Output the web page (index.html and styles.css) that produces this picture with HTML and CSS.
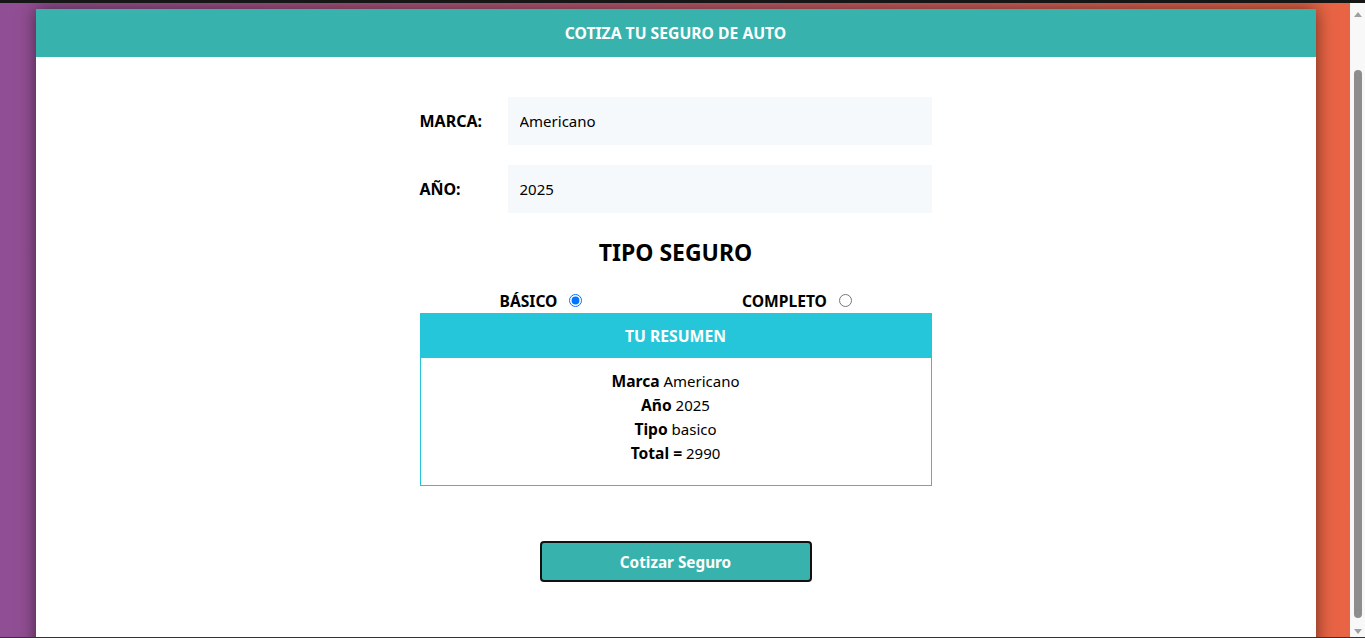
FILE: index.html
```html
<!DOCTYPE html>
<html lang="es">

<head>
    <meta charset="UTF-8">
    <title>Cotizador de Seguros</title>
    <link rel="stylesheet" href="styles.css">
</head>

<body>
    <div class="pagina">
        <div class="contenedor">
            <header class="cabecera">
                <h1>Cotiza tu seguro de auto</h1>
            </header>
            <form class="formulario">
                <div class="campo">
                    <label for="marca">Marca:</label>
                    <select id="marca" name="marca">
                        <option value="americano" selected>Americano</option>
                        <option value="europeo">Europeo</option>
                        <option value="asiatico">Asiático</option>
                    </select>
                </div>
                <div class="campo">
                    <label for="year">Año:</label>
                    <select id="year" name="year">
                        <option value="2025" selected>2025</option>
                        <option value="2024">2024</option>
                        <option value="2023">2023</option>
                    </select>
                </div>

                <h2 class="tipo-titulo">Tipo Seguro</h2>
                <div class="opciones">
                    <div class="opcion">
                        <label for="basico">Básico</label>
                        <input type="radio" id="basico" name="plan" value="basico" checked>
                    </div>
                    <div class="opcion">
                        <label for="completo">Completo</label>
                        <input type="radio" id="completo" name="plan" value="completo">
                    </div>
                </div>

                <!-- resumen de la cotizacion -->
                <div class="resumen">
                    <div class="resumen-titulo">Tu Resumen</div>
                    <ul class="resumen-lista">
                        <li><b>Marca</b> Americano</li>
                        <li><b>Año</b> 2025</li>
                        <li><b>Tipo</b> basico</li>
                        <li><b>Total =</b> 2990</li>
                    </ul>
                </div>

                <div class="acciones">
                    <button type="button" class="boton">Cotizar Seguro</button>
                </div>
            </form>
        </div>
    </div>
    <!-- barra de desplazamiento de la ventana -->
    <div class="barra">
        <span class="flecha arriba"></span>
        <div class="pista"><span class="pulgar"></span></div>
        <span class="flecha abajo"></span>
    </div>
</body>

</html>
```

FILE: styles.css
```css
html,
body {
    height: 100%;
}

body {
    margin: 0;
    box-sizing: border-box;
    border-top: 3px solid #161616;
    border-bottom: 1px solid #333;
    display: flex;
    overflow: hidden;
    font-family: "Noto Sans", "Open Sans", sans-serif;
    color: #000;
}

.pagina {
    flex: 1;
    overflow: hidden;
    padding-left: 1px;
    background: linear-gradient(to right, #904e95, #e96443);
}

.contenedor {
    width: 1280px;
    margin: 6px auto 0;
    background-color: #fff;
    box-shadow: 0 0 16px rgba(0, 0, 0, 0.55);
    min-height: 700px;
}

.cabecera {
    background-color: #38b2ac;
    height: 48px;
    display: flex;
    align-items: center;
    justify-content: center;
}

.cabecera h1 {
    margin: 0;
    color: #fff;
    font-size: 15.7px;
    font-weight: bold;
    text-transform: uppercase;
}

.formulario {
    width: 512px;
    margin: 0 auto;
    padding-top: 40px;
}

.campo {
    display: flex;
    align-items: center;
    margin-bottom: 20px;
}

.campo label {
    width: 88px;
    flex: none;
    font-weight: bold;
    font-size: 16px;
    text-transform: uppercase;
}

.campo select {
    flex: 1;
    height: 48px;
    padding: 0 12px;
    border: none;
    background-color: #f6f9fc;
    font-family: inherit;
    font-size: 15px;
    color: #000;
    appearance: none;
    -webkit-appearance: none;
}

.tipo-titulo {
    margin: 23px 0 0;
    font-size: 23px;
    line-height: 32px;
    text-align: center;
    text-transform: uppercase;
}

.opciones {
    display: grid;
    grid-template-columns: 1fr 1fr;
    margin-top: 20px;
    height: 25px;
}

.opcion {
    display: flex;
    align-items: center;
    justify-content: center;
    padding-right: 10px;
}

.opcion label {
    font-weight: bold;
    font-size: 15.6px;
    text-transform: uppercase;
    margin-right: 7px;
}

.opcion input {
    margin: 0 3px 0 5px;
}

.resumen {
    border: 1px solid #26c6da;
    text-align: center;
}

.resumen-titulo {
    background-color: #26c6da;
    color: #fff;
    font-weight: bold;
    font-size: 15.7px;
    text-transform: uppercase;
    height: 44px;
    line-height: 44px;
}

.resumen-lista {
    list-style: none;
    margin: 0;
    padding: 11px 0 20px;
    font-size: 15px;
    line-height: 24px;
}

.resumen-lista b {
    font-size: 15.6px;
}

.acciones {
    text-align: center;
    margin-top: 55px;
}

.boton {
    width: 272px;
    height: 41px;
    background-color: #38b2ac;
    color: #fff;
    border: 2px solid #111;
    border-radius: 4px;
    font-family: inherit;
    font-weight: bold;
    font-size: 15.3px;
    cursor: pointer;
}

.barra {
    width: 15px;
    flex: none;
    background-color: #f8f8f8;
    display: flex;
    flex-direction: column;
    align-items: center;
}

.flecha {
    width: 0;
    height: 0;
    border-left: 4px solid transparent;
    border-right: 4px solid transparent;
}

.flecha.arriba {
    margin: 9px 0 5px;
    border-bottom: 5px solid #a0a0a0;
}

.flecha.abajo {
    margin: 4px 0 3px;
    border-top: 5px solid #a0a0a0;
}

.pista {
    flex: 1;
    width: 100%;
    display: flex;
    flex-direction: column;
    align-items: center;
}

.pulgar {
    display: block;
    width: 8px;
    margin-top: 48px;
    height: 548px;
    border-radius: 4px;
    background-color: #8d8d8d;
}
```
